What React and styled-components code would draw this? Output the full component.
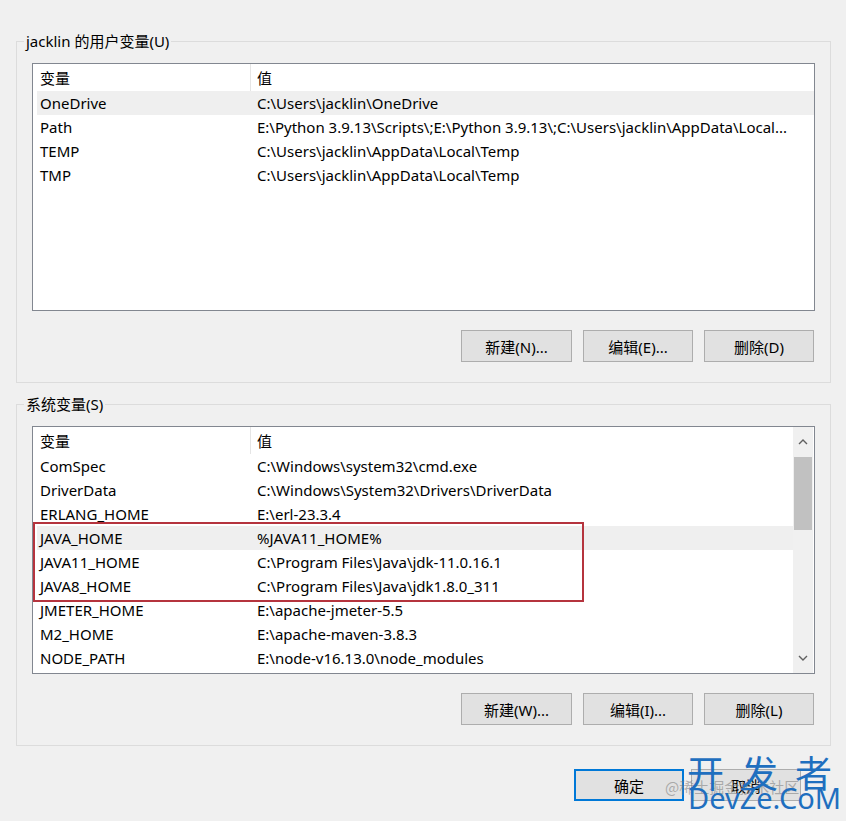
import React from "react"
import styled, { createGlobalStyle } from "styled-components"

const GlobalStyle = createGlobalStyle`
  html, body {
    margin: 0;
    padding: 0;
    background: #f0f0f0;
  }
  body {
    font-family: "Noto Sans", "Noto Sans CJK SC", sans-serif;
    font-size: 15px;
    color: #000;
  }
`

const Page = styled.div`
  position: relative;
  width: 846px;
  height: 821px;
  overflow: hidden;
  padding-top: 41px;
  box-sizing: border-box;
  background: #f0f0f0;
`

const GroupBox = styled.div`
  position: relative;
  margin: ${p => (p.$first ? "0" : "21px")} 15px 0 16px;
  border: 1px solid #dcdcdc;
  padding: 21px 15px 20px 15px;
`

const GroupLabel = styled.span`
  position: absolute;
  top: -12px;
  left: 7px;
  padding: 0 2px;
  background: #f0f0f0;
  line-height: 22px;
  font-size: 15px;
  font-family: "Noto Sans", "Noto Sans CJK SC", sans-serif;
`

const ListBox = styled.div`
  position: relative;
  height: 248px;
  box-sizing: border-box;
  border: 1px solid #828790;
  background: #fff;
  display: flex;
`

const ListBody = styled.div`
  flex: 1;
  min-width: 0;
  padding-left: 4px;
`

const Grid = styled.div`
  display: grid;
  grid-template-columns: 213px 1fr;
  height: ${p => p.$h || 24}px;
  align-items: center;
  background: ${p => (p.$hot ? "#efefef" : "transparent")};
  line-height: 20px;
`

const NameCell = styled.div`
  padding-left: 3px;
  white-space: nowrap;
`

const ValueCell = styled.div`
  height: 100%;
  display: flex;
  align-items: center;
  padding-left: 6px;
  min-width: 0;
  white-space: nowrap;
  border-left: ${p => (p.$head ? "1px solid #e5e5e5" : "1px solid transparent")};
`

const ScrollBar = styled.div`
  width: 20px;
  margin-right: 1px;
  background: #f0f0f0;
  display: flex;
  flex-direction: column;
  align-items: center;
`

const Arrow = styled.div`
  height: 30px;
  width: 100%;
  display: flex;
  align-items: center;
  justify-content: center;
`

const Track = styled.div`
  flex: 1;
  width: 100%;
`

const Thumb = styled.div`
  margin: 0 1px;
  height: 73px;
  background: #c1c1c1;
`

const Highlight = styled.div`
  position: absolute;
  left: 0;
  top: 95px;
  width: 551px;
  height: 80px;
  border: 2px solid #b5343e;
  box-sizing: border-box;
  pointer-events: none;
`

const ButtonRow = styled.div`
  display: flex;
  justify-content: flex-end;
  gap: 11px;
  margin-top: 19px;
  padding-right: 1px;
`

const Button = styled.div`
  width: ${p => p.$w || 110}px;
  height: 32px;
  box-sizing: border-box;
  display: flex;
  align-items: center;
  justify-content: center;
  background: #e1e1e1;
  border: ${p => (p.$default ? "2px solid #0078d7" : "1px solid #adadad")};
  font-size: 15px;
`

const Footer = styled.div`
  display: flex;
  justify-content: flex-end;
  gap: 7px;
  margin-top: 23px;
  padding-right: 45px;
`

const Watermark = styled.div`
  position: absolute;
  left: 664px;
  top: 752px;
  width: 182px;
  height: 68px;
  pointer-events: none;
  white-space: nowrap;
`

const MarkCn = styled.div`
  position: absolute;
  left: 23px;
  top: 0;
  font-family: "Noto Sans CJK SC", sans-serif;
  font-size: 37px;
  line-height: 40px;
  color: #1f6fbf;
  display: flex;
  gap: 17px;
`

const MarkEn = styled.div`
  position: absolute;
  left: 24px;
  top: 29px;
  font-family: "Noto Sans", sans-serif;
  font-size: 29px;
  line-height: 34px;
  color: #1f6fbf;
`

const MarkSmall = styled.div`
  position: absolute;
  left: 1px;
  top: 25px;
  font-family: "Noto Sans CJK SC", sans-serif;
  font-size: 15px;
  line-height: 20px;
  color: rgba(120, 120, 120, 0.55);
`

const userVars = [
  ["OneDrive", "C:\\Users\\jacklin\\OneDrive"],
  ["Path", "E:\\Python 3.9.13\\Scripts\\;E:\\Python 3.9.13\\;C:\\Users\\jacklin\\AppData\\Local..."],
  ["TEMP", "C:\\Users\\jacklin\\AppData\\Local\\Temp"],
  ["TMP", "C:\\Users\\jacklin\\AppData\\Local\\Temp"],
]

const sysVars = [
  ["ComSpec", "C:\\Windows\\system32\\cmd.exe"],
  ["DriverData", "C:\\Windows\\System32\\Drivers\\DriverData"],
  ["ERLANG_HOME", "E:\\erl-23.3.4"],
  ["JAVA_HOME", "%JAVA11_HOME%"],
  ["JAVA11_HOME", "C:\\Program Files\\Java\\jdk-11.0.16.1"],
  ["JAVA8_HOME", "C:\\Program Files\\Java\\jdk1.8.0_311"],
  ["JMETER_HOME", "E:\\apache-jmeter-5.5"],
  ["M2_HOME", "E:\\apache-maven-3.8.3"],
  ["NODE_PATH", "E:\\node-v16.13.0\\node_modules"],
]

const Chevron = ({ down }) => (
  <svg width="10" height="6" viewBox="0 0 10 6">
    <path
      d={down ? "M1 1 L5 5 L9 1" : "M1 5 L5 1 L9 5"}
      fill="none"
      stroke="#606060"
      strokeWidth="1.4"
    />
  </svg>
)

const VarList = ({ rows, hot, scroll, children }) => (
  <ListBox>
    <ListBody>
      <Grid $h={27}>
        <NameCell>变量</NameCell>
        <ValueCell $head>值</ValueCell>
      </Grid>
      {rows.map(([name, value], i) => (
        <Grid key={name} $hot={i === hot}>
          <NameCell>{name}</NameCell>
          <ValueCell>{value}</ValueCell>
        </Grid>
      ))}
    </ListBody>
    {scroll && (
      <ScrollBar>
        <Arrow><Chevron /></Arrow>
        <Track><Thumb /></Track>
        <Arrow><Chevron down /></Arrow>
      </ScrollBar>
    )}
    {children}
  </ListBox>
)

export default function App() {
  return (
    <Page>
      <GlobalStyle />
      <GroupBox $first>
        <GroupLabel>jacklin 的用户变量(U)</GroupLabel>
        <VarList rows={userVars} hot={0} />
        <ButtonRow>
          <Button $w={111}>新建(N)...</Button>
          <Button>编辑(E)...</Button>
          <Button>删除(D)</Button>
        </ButtonRow>
      </GroupBox>

      <GroupBox>
        <GroupLabel>系统变量(S)</GroupLabel>
        <VarList rows={sysVars} hot={3} scroll>
          <Highlight />
        </VarList>
        <ButtonRow>
          <Button $w={111}>新建(W)...</Button>
          <Button>编辑(I)...</Button>
          <Button>删除(L)</Button>
        </ButtonRow>
      </GroupBox>

      <Footer>
        <Button $default $w={110}>确定</Button>
        <Button $w={110}>取消</Button>
      </Footer>

      <Watermark>
        <MarkSmall>@稀土掘金技术社区</MarkSmall>
        <MarkCn><span>开</span><span>发</span><span>者</span></MarkCn>
        <MarkEn>DevZe.CoM</MarkEn>
      </Watermark>
    </Page>
  )
}
